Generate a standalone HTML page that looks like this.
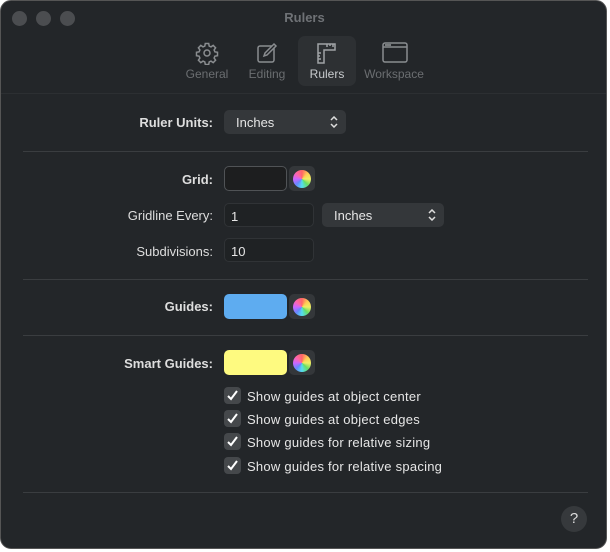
<!DOCTYPE html>
<html><head><style>
*{box-sizing:border-box;margin:0;padding:0}
body{width:610px;height:552px;background:#fff;font-family:"Liberation Sans",sans-serif;position:relative;overflow:hidden}
.win{position:absolute;left:0;top:0;width:607px;height:549px;background:#232629;border:1px solid #555;border-radius:11px;overflow:hidden}
.a{position:absolute}
.dot{width:15px;height:15px;border-radius:50%;background:#4b4d50;top:10px}
.lbl{position:absolute;right:393px;font-size:13px;color:#dedede;text-align:right;white-space:nowrap}
.b{font-weight:bold}
.pop{position:absolute;background:#34373a;border-radius:5px;color:#e6e6e6;font-size:13px;padding:5px 0 0 12px;height:24px}
.pop svg{position:absolute;right:8px;top:6px}
.fld{position:absolute;border:1px solid #303336;border-radius:5px;background:#1f2224;color:#e6e6e6;font-size:13px;padding:5px 0 0 6px;width:90px;height:24px}
.well{position:absolute;left:223px;width:63px;height:25px;border-radius:5px}
.cb{position:absolute;left:288px;width:26px;height:25px;border-radius:5px;background:#34373a}
.cb:after{content:"";position:absolute;left:4px;top:4px;width:18px;height:18px;border-radius:50%;background:conic-gradient(#f66,#fc5,#ee6,#6d6,#5de,#68f,#c6f,#f6a,#f66)}
.hr{position:absolute;left:22px;width:565px;height:1px;background:#3a3d40}
.chk{position:absolute;left:223px;width:17px;height:17px;border-radius:4px;background:#45484b}
.chk svg{position:absolute;left:2px;top:2px}
.ct{position:absolute;left:246px;font-size:13px;color:#e6e6e6;letter-spacing:0.25px}
.tb{position:absolute;font-size:12px;color:#6b6e71;text-align:center;top:66px}
</style></head><body>
<div class="win">
<div class="a dot" style="left:11px"></div><div class="a dot" style="left:35px"></div><div class="a dot" style="left:59px"></div>
<div class="a" style="left:0;width:607px;top:9px;text-align:center;font-size:13px;font-weight:bold;color:#6f7276">Rulers</div>
<div class="a" style="left:297px;top:35px;width:58px;height:50px;border-radius:7px;background:#2d3033"></div>
<svg class="a" style="left:194px;top:40px" width="24" height="24" viewBox="0 0 24 24" fill="none" stroke="#8a8d90" stroke-width="1.5"><circle cx="12" cy="12" r="3"/><path d="M10.3 2.5h3.4l.5 2.6 1.8.8 2.2-1.5 2.4 2.4-1.5 2.2.8 1.8 2.6.5v3.4l-2.6.5-.8 1.8 1.5 2.2-2.4 2.4-2.2-1.5-1.8.8-.5 2.6h-3.4l-.5-2.6-1.8-.8-2.2 1.5-2.4-2.4 1.5-2.2-.8-1.8-2.6-.5v-3.4l2.6-.5.8-1.8-1.5-2.2 2.4-2.4 2.2 1.5 1.8-.8z"/></svg>
<svg class="a" style="left:254px;top:40px" width="24" height="24" viewBox="0 0 24 24" fill="none" stroke="#8a8d90" stroke-width="1.5"><rect x="3" y="5" width="16" height="16" rx="2"/><path d="M9 15l1-3 9-9 2 2-9 9z" fill="#232629"/></svg>
<svg class="a" style="left:313px;top:40px" width="24" height="24" viewBox="0 0 24 24" fill="none" stroke="#a0a3a6" stroke-width="1.5"><path d="M4 3h17v6H10v13H4z"/><path d="M13 3v3M16 3v2M19 3v3M4 12h3M4 15h2M4 18h3"/></svg>
<svg class="a" style="left:380px;top:40px" width="28" height="24" viewBox="0 0 28 24" fill="none" stroke="#8a8d90" stroke-width="1.5"><rect x="2" y="2" width="24" height="19" rx="2"/><path d="M2 6h24"/><circle cx="5" cy="4" r=".4"/><circle cx="7" cy="4" r=".4"/><circle cx="9" cy="4" r=".4"/></svg>
<div class="tb" style="left:176px;width:60px">General</div>
<div class="tb" style="left:236px;width:60px">Editing</div>
<div class="tb" style="left:297px;width:58px;color:#c8cbce">Rulers</div>
<div class="tb" style="left:358px;width:70px">Workspace</div>
<div class="hr" style="left:0;width:607px;top:92px;background:#2c2f32"></div>

<div class="lbl b" style="top:114px">Ruler Units:</div>
<div class="pop" style="left:223px;top:109px;width:122px">Inches<svg width="8" height="12" viewBox="0 0 8 12" fill="none" stroke="#ddd" stroke-width="1.5"><path d="M1 4l3-3 3 3M1 8l3 3 3-3"/></svg></div>
<div class="hr" style="top:150px"></div>

<div class="lbl b" style="top:171px">Grid:</div>
<div class="well" style="top:165px;background:#1d1e1f;border:1px solid #505356"></div><div class="cb" style="top:165px"></div>
<div class="lbl" style="top:207px">Gridline Every:</div>
<div class="fld" style="left:223px;top:202px">1</div>
<div class="pop" style="left:321px;top:202px;width:122px">Inches<svg width="8" height="12" viewBox="0 0 8 12" fill="none" stroke="#ddd" stroke-width="1.5"><path d="M1 4l3-3 3 3M1 8l3 3 3-3"/></svg></div>
<div class="lbl" style="top:243px">Subdivisions:</div>
<div class="fld" style="left:223px;top:237px">10</div>
<div class="hr" style="top:278px"></div>

<div class="lbl b" style="top:298px">Guides:</div>
<div class="well" style="top:293px;background:#5eacf0"></div><div class="cb" style="top:293px"></div>
<div class="hr" style="top:334px"></div>

<div class="lbl b" style="top:355px">Smart Guides:</div>
<div class="well" style="top:349px;background:#fefa80"></div><div class="cb" style="top:349px"></div>

<div class="chk" style="top:386px"><svg width="13" height="13" viewBox="0 0 13 13" fill="none" stroke="#fff" stroke-width="2"><path d="M2 7l3 3 6-8"/></svg></div><div class="ct" style="top:388px">Show guides at object center</div>
<div class="chk" style="top:409px"><svg width="13" height="13" viewBox="0 0 13 13" fill="none" stroke="#fff" stroke-width="2"><path d="M2 7l3 3 6-8"/></svg></div><div class="ct" style="top:411px">Show guides at object edges</div>
<div class="chk" style="top:432px"><svg width="13" height="13" viewBox="0 0 13 13" fill="none" stroke="#fff" stroke-width="2"><path d="M2 7l3 3 6-8"/></svg></div><div class="ct" style="top:434px">Show guides for relative sizing</div>
<div class="chk" style="top:456px"><svg width="13" height="13" viewBox="0 0 13 13" fill="none" stroke="#fff" stroke-width="2"><path d="M2 7l3 3 6-8"/></svg></div><div class="ct" style="top:458px">Show guides for relative spacing</div>
<div class="hr" style="top:491px"></div>
<div class="a" style="left:560px;top:505px;width:26px;height:26px;border-radius:50%;background:#36393c;color:#ddd;font-size:15px;text-align:center;line-height:26px">?</div>
</div>
</body></html>
